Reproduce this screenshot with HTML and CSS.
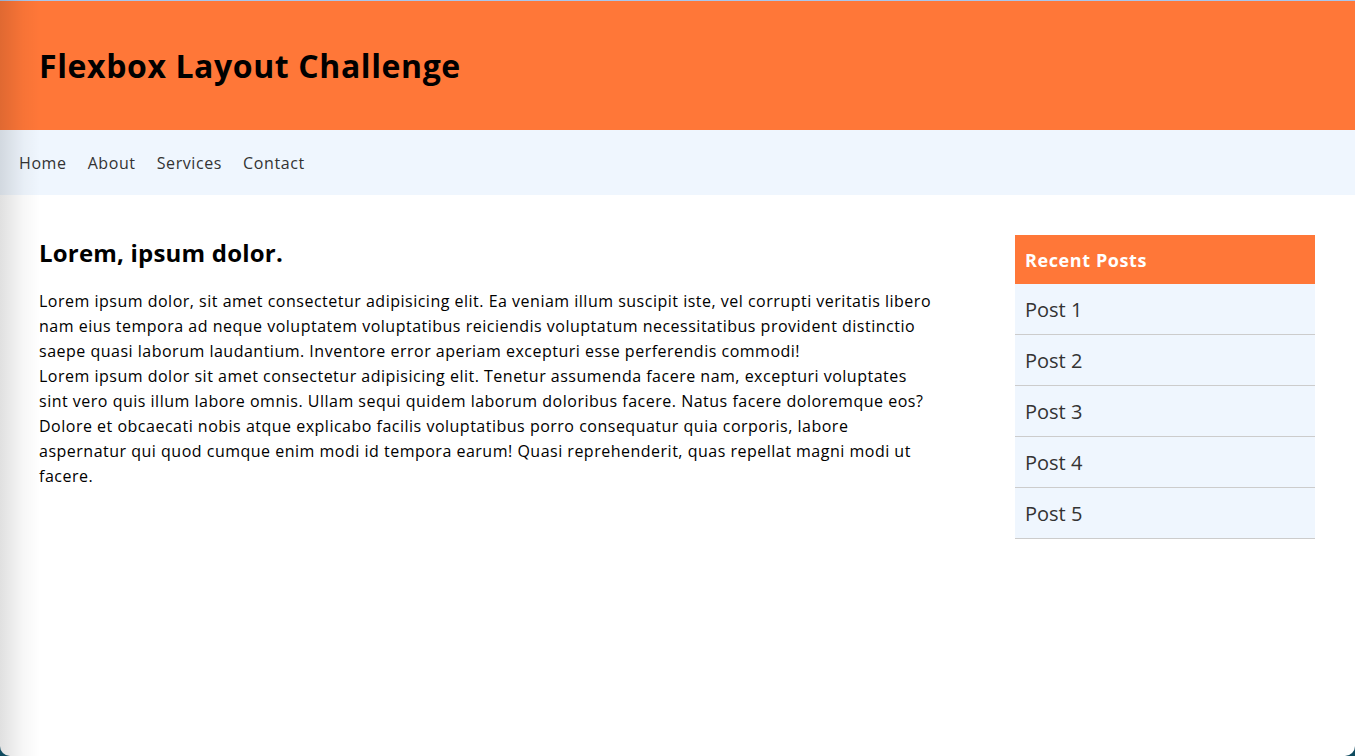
FILE: index.html
```html
<!DOCTYPE html>
<html lang="en">
<head>
<meta charset="utf-8">
<title>Flexbox Layout Challenge</title>
<link rel="stylesheet" href="styles.css">
</head>
<body>
<div class="page">
  <header class="site-header">
    <h1 class="site-title">Flexbox Layout Challenge</h1>
  </header>
  <nav class="site-nav">
    <a href="#" class="nav-link">Home</a>
    <a href="#" class="nav-link">About</a>
    <a href="#" class="nav-link">Services</a>
    <a href="#" class="nav-link">Contact</a>
  </nav>
  <div class="content">
    <main class="main">
      <h2 class="main-title">Lorem, ipsum dolor.</h2>
      <p class="main-text">Lorem ipsum dolor, sit amet consectetur adipisicing elit. Ea veniam illum suscipit iste, vel corrupti veritatis libero nam eius tempora ad neque voluptatem voluptatibus reiciendis voluptatum necessitatibus provident distinctio saepe quasi laborum laudantium. Inventore error aperiam excepturi esse perferendis commodi!<br>Lorem ipsum dolor sit amet consectetur adipisicing elit. Tenetur assumenda facere nam, excepturi voluptates sint vero quis illum labore omnis. Ullam sequi quidem laborum doloribus facere. Natus facere doloremque eos? Dolore et obcaecati nobis atque explicabo facilis voluptatibus porro consequatur quia corporis, labore aspernatur qui quod cumque enim modi id tempora earum! Quasi reprehenderit, quas repellat magni modi ut facere.</p>
    </main>
    <aside class="sidebar">
      <h3 class="sidebar-title">Recent Posts</h3>
      <ul class="post-list">
        <li class="post-item">Post 1</li>
        <li class="post-item">Post 2</li>
        <li class="post-item">Post 3</li>
        <li class="post-item">Post 4</li>
        <li class="post-item">Post 5</li>
      </ul>
    </aside>
  </div>
</div>
</body>
</html>
```
FILE: styles.css
```css
* { box-sizing: border-box; }
html { background: #0e4a5e; }
body {
  margin: 0;
  font-family: "Open Sans", "Liberation Sans", sans-serif;
  color: #000;
}
.page {
  position: relative;
  height: 756px;
  background: #fff;
  border-radius: 0 0 10px 10px;
  overflow: hidden;
}
.page::before {
  content: "";
  position: absolute;
  left: 0; top: 0; bottom: 0;
  width: 40px;
  background: linear-gradient(to right, rgba(0,0,0,0.12), rgba(0,0,0,0.03) 60%, rgba(0,0,0,0));
  pointer-events: none;
  z-index: 2;
}
.site-header {
  height: 130px;
  background: #ff7738;
  border-top: 1px solid #a9c6ec;
  display: flex;
  align-items: center;
  padding: 0 39px;
}
.site-title {
  margin: 0;
  font-size: 32px;
  font-weight: 700;
  letter-spacing: 0.6px;
  line-height: 1;
  color: #000;
}
.site-nav {
  height: 65px;
  background: #eff6fe;
  display: flex;
  align-items: center;
  gap: 21px;
  padding-left: 19px;
}
.nav-link {
  font-size: 16px;
  letter-spacing: 0.6px;
  color: #333;
  text-decoration: none;
}
.content {
  display: flex;
  align-items: flex-start;
  padding: 40px 40px 0 39px;
}
.main {
  flex: 1;
  margin-right: 80px;
}
.main-title {
  margin: 0;
  font-size: 24px;
  letter-spacing: 0.2px;
  line-height: 36px;
  font-weight: 700;
}
.main-text {
  margin: 18px 0 0;
  font-size: 16px;
  letter-spacing: 0.5px;
  line-height: 25px;
}
.sidebar {
  width: 300px;
  flex: none;
}
.sidebar-title {
  margin: 0;
  height: 49px;
  display: flex;
  align-items: center;
  padding-left: 10px;
  background: #ff7738;
  color: #fff;
  font-size: 18px;
  letter-spacing: 0.6px;
  font-weight: 700;
}
.post-list {
  list-style: none;
  margin: 0;
  padding: 0;
}
.post-item {
  height: 51px;
  display: flex;
  align-items: center;
  padding-left: 10px;
  background: #eff6fe;
  border-bottom: 1px solid #ccc;
  font-size: 20px;
  color: #333;
}
```
